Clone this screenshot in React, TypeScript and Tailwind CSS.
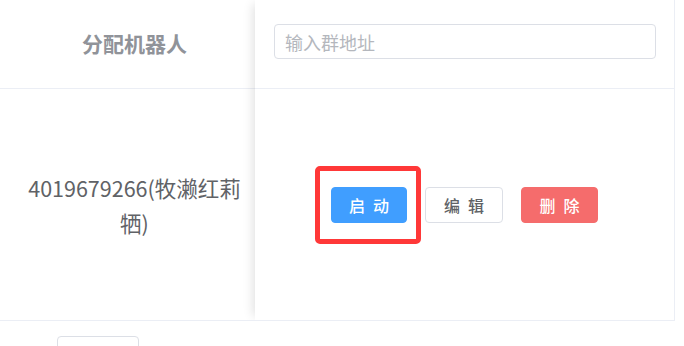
const font = '"Noto Sans CJK SC", "Noto Sans", sans-serif';

function Btn({ label, kind }: { label: string; kind: 'primary' | 'plain' | 'danger' }) {
  const styles = {
    primary: 'w-[76px] bg-[#409eff] border-[#409eff] text-white',
    plain: 'w-[78px] bg-white border-[#dcdfe6] text-[#606266]',
    danger: 'w-[77px] bg-[#f56c6c] border-[#f56c6c] text-white',
  }[kind];
  // element-ui puts a space between two-character labels
  return (
    <button className={`h-[36px] rounded-[4px] border flex items-center justify-center gap-[8px] text-[16px] font-medium ${styles}`}>
      {label.split('').map((c, i) => (
        <span key={i}>{c}</span>
      ))}
    </button>
  );
}

export default function App() {
  return (
    <div className="w-[684px] h-[346px] overflow-hidden bg-white" style={{ fontFamily: font }}>
      <div className="w-[675px] flex overflow-hidden border-r border-b border-[#ebeef5]">
        {/* Left column */}
        <div className="w-[255px] flex flex-col">
          <div className="h-[89px] border-b border-[#ebeef5] flex items-center justify-center pl-[24px] pr-[10px] text-[21px] font-bold text-[#909399]">
            分配机器人
          </div>
          <div className="h-[231px] flex items-center justify-center pl-[24px] pr-[10px] text-center text-[21.5px] leading-[35px] text-[#606266]">
            4019679266(牧濑红莉牺)
          </div>
        </div>

        {/* Fixed right column */}
        <div className="flex-1 flex flex-col relative z-10 bg-white shadow-[-6px_0_10px_-4px_rgba(0,0,0,0.12)]">
          <div className="h-[89px] border-b border-[#ebeef5] pt-[24px] pl-[19px] pr-[18px]">
            <input
              className="w-full h-[35px] rounded-[4px] border border-[#dcdfe6] px-[10px] text-[18px] text-[#606266] placeholder:text-[#b4b7bd] outline-none"
              placeholder="输入群地址"
            />
          </div>
          <div className="h-[231px] flex items-center justify-center gap-[18px]">
            <div className="relative">
              <Btn label="启动" kind="primary" />
              <div className="absolute -left-[16px] -top-[21px] -right-[14px] -bottom-[21px] border-[5px] border-[#ff3838] rounded-[5px] pointer-events-none" />
            </div>
            <Btn label="编辑" kind="plain" />
            <Btn label="删除" kind="danger" />
          </div>
        </div>
      </div>

      {/* Pagination */}
      <div className="ml-[57px] mt-[15px] w-[82px] h-[36px] rounded-[4px] border border-[#dcdfe6]" />
    </div>
  );
}
